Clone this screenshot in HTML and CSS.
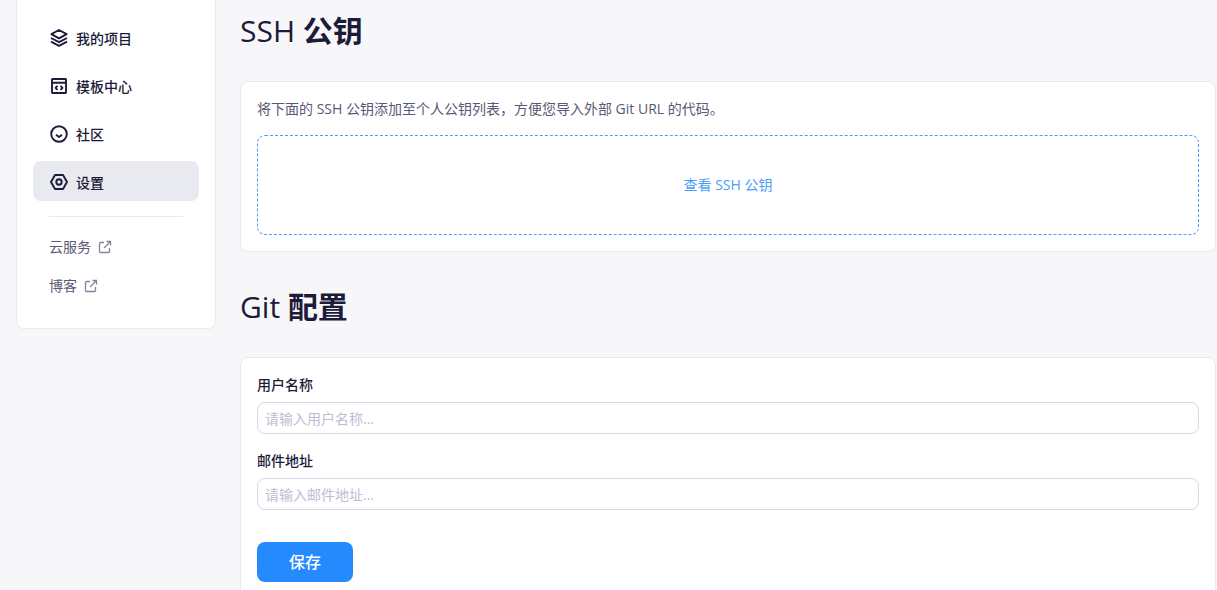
FILE: index.html
```html
<!DOCTYPE html>
<html lang="zh-CN">
<head>
<meta charset="utf-8">
<title>设置</title>
<link rel="stylesheet" href="styles.css">
</head>
<body>
<div class="layout">
  <aside class="sidebar">
    <nav class="menu">
      <a class="menu-item" href="#projects">
        <svg class="icon" viewBox="0 0 20 20"><path d="M10 2 17.6 6.2 10 10.4 2.4 6.2Z"/><path d="M2 10l8 4.2 8-4.2M2 13.7l8 4.2 8-4.2"/></svg>
        <span>我的项目</span>
      </a>
      <a class="menu-item" href="#templates">
        <svg class="icon" viewBox="0 0 20 20"><rect x="3" y="3" width="14" height="14" rx="0.5"/><path d="M3 6.8h14M8.5 9.8l-2 2 2 2M11.5 9.8l2 2-2 2"/></svg>
        <span>模板中心</span>
      </a>
      <a class="menu-item" href="#community">
        <svg class="icon" viewBox="0 0 20 20"><circle cx="10" cy="10" r="7.8"/><path d="M7 10.8 10 13l3-2.2"/></svg>
        <span>社区</span>
      </a>
      <a class="menu-item active" href="#settings" aria-current="page">
        <svg class="icon" viewBox="0 0 20 20"><path d="M6 3h8l4 7-4 7H6L2 10Z"/><circle cx="10" cy="10" r="2.7"/></svg>
        <span>设置</span>
      </a>
    </nav>
    <hr class="divider">
    <div class="links">
      <a class="link" href="#cloud">云服务
        <svg class="external" viewBox="0 0 14 14"><path d="M6 2.5H2.5a1 1 0 0 0-1 1v8a1 1 0 0 0 1 1h8a1 1 0 0 0 1-1V8M8.5 1.5h4v4M12.5 1.5 6 8"/></svg>
      </a>
      <a class="link" href="#blog">博客
        <svg class="external" viewBox="0 0 14 14"><path d="M6 2.5H2.5a1 1 0 0 0-1 1v8a1 1 0 0 0 1 1h8a1 1 0 0 0 1-1V8M8.5 1.5h4v4M12.5 1.5 6 8"/></svg>
      </a>
    </div>
  </aside>
  <main class="content">
    <h1 class="title">SSH <strong>公钥</strong></h1>
    <section class="card">
      <p class="hint">将下面的 SSH 公钥添加至个人公钥列表，方便您导入外部 Git URL 的代码。</p>
      <button class="reveal" type="button">查看 SSH 公钥</button>
    </section>
    <h1 class="title">Git <strong>配置</strong></h1>
    <form class="card">
      <label class="label" for="username">用户名称</label>
      <input class="field" id="username" type="text" placeholder="请输入用户名称...">
      <label class="label" for="email">邮件地址</label>
      <input class="field" id="email" type="text" placeholder="请输入邮件地址...">
      <button class="save" type="button">保存</button>
    </form>
  </main>
</div>
</body>
</html>
```
FILE: styles.css
```css
* {
  box-sizing: border-box;
}

body {
  margin: 0;
  height: 100vh;
  overflow: hidden;
  background: #f7f7f9;
  color: #1c1b3a;
  font: 14px/20px "Open Sans", "Noto Sans CJK SC", sans-serif;
}

button,
input {
  font: inherit;
}

.layout {
  display: flex;
  align-items: flex-start;
  gap: 24px;
  padding: 0 1px 0 16px;
}

.sidebar {
  flex: 0 0 200px;
  padding: 17px 16px 23px;
  background: #fff;
  border: 1px solid #e9e9f0;
  border-top: 0;
  border-radius: 0 0 8px 8px;
}

.menu {
  display: grid;
  gap: 8px;
}

.menu-item {
  display: flex;
  align-items: center;
  gap: 7px;
  height: 40px;
  padding: 4px 16px 0;
  border-radius: 8px;
  color: inherit;
  font-weight: 500;
  text-decoration: none;
}

.active {
  background: #e9eaef;
}

.icon {
  width: 20px;
  height: 20px;
  margin-bottom: 2px;
  fill: none;
  stroke: currentColor;
  stroke-width: 1.9;
  stroke-linejoin: round;
}

.divider {
  height: 1px;
  margin: 15px 16px 10px;
  border: 0;
  background: #e9e9f0;
}

.links {
  display: grid;
  padding: 0 16px;
}

.link {
  display: flex;
  align-items: center;
  gap: 7px;
  height: 39px;
  color: #5a5876;
  text-decoration: none;
}

.external {
  width: 14px;
  height: 14px;
  fill: none;
  stroke: #85849a;
  stroke-width: 1.3;
}

.content {
  flex: 1;
  min-width: 0;
  padding-top: 10px;
}

.title {
  margin: 0 0 30px;
  font-size: 30px;
  line-height: 41px;
  font-weight: 400;
}

.title strong {
  font-weight: 700;
}

.card {
  margin-bottom: 34px;
  padding: 16px;
  background: #fff;
  border: 1px solid #e9e9f0;
  border-radius: 8px;
}

.hint {
  margin: 0 0 16px;
  line-height: 21px;
  color: #5a5876;
}

.reveal {
  display: block;
  width: 100%;
  height: 100px;
  background: none;
  border: 1px dashed #4a9df8;
  border-radius: 8px;
  color: #4a9df8;
}

.label {
  display: block;
  margin-bottom: 6px;
  line-height: 22px;
  font-weight: 500;
}

.field {
  display: block;
  width: 100%;
  height: 32px;
  margin-bottom: 16px;
  padding: 0 7px;
  background: #fff;
  border: 1px solid #d9d9e6;
  border-radius: 8px;
}

.field::placeholder {
  color: #bdbdd3;
}

.save {
  width: 96px;
  height: 40px;
  margin-top: 16px;
  background: #268aff;
  border: 0;
  border-radius: 8px;
  color: #fff;
  font-size: 16px;
  font-weight: 500;
}
```
